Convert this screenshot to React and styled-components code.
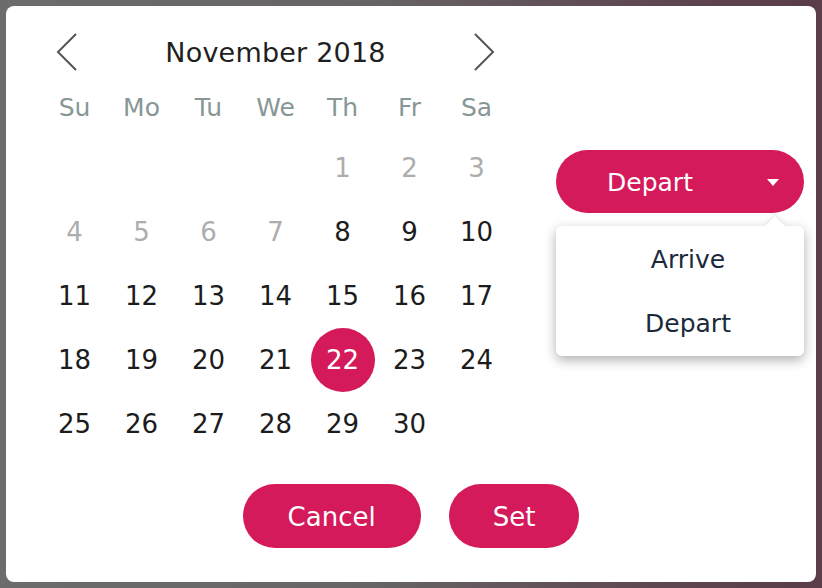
import React, { useState } from 'react';
import styled, { createGlobalStyle } from 'styled-components';

const GlobalStyle = createGlobalStyle`
  html, body {
    margin: 0;
    padding: 0;
  }
  body {
    width: 822px;
    height: 588px;
    overflow: hidden;
    font-family: "DejaVu Sans", "Noto Sans", sans-serif;
    background: linear-gradient(90deg, #6c6c6c 0%, #676465 45%, #5e4652 80%, #5a3c4a 100%);
  }
`;

const CRIMSON = '#d41a5a';

// 背景のオーバーレイ
const Overlay = styled.div`
  width: 822px;
  height: 588px;
  padding: 6px;
  box-sizing: border-box;
`;

const Dialog = styled.div`
  width: 810px;
  height: 576px;
  box-sizing: border-box;
  background: #fff;
  border-radius: 8px;
  padding: 14px 12px 0 35px;
  display: flex;
  flex-direction: column;
`;

const Body = styled.div`
  display: flex;
  align-items: flex-start;
`;

const Calendar = styled.div`
  width: 469px;
`;

const Header = styled.div`
  height: 64px;
  display: flex;
  align-items: center;
  justify-content: space-between;
  padding: 0 14px 0 14px;
`;

const ArrowButton = styled.button`
  border: none;
  background: none;
  padding: 0;
  width: 24px;
  height: 40px;
  display: flex;
  align-items: center;
  justify-content: center;
  cursor: pointer;
`;

const MonthTitle = styled.div`
  font-size: 27px;
  color: #1f1f1f;
  letter-spacing: 0.2px;
`;

const WeekRow = styled.div`
  display: grid;
  grid-template-columns: repeat(7, 67px);
  height: 52px;
  padding-bottom: 6px;
  box-sizing: border-box;
  align-items: center;
`;

const WeekDay = styled.div`
  text-align: center;
  font-size: 25px;
  color: #879796;
`;

const DaysGrid = styled.div`
  display: grid;
  grid-template-columns: repeat(7, 67px);
  grid-auto-rows: 64px;
`;

const DayCell = styled.div`
  display: flex;
  align-items: center;
  justify-content: center;
`;

const Day = styled.button`
  width: 64px;
  height: 64px;
  border-radius: 50%;
  border: none;
  padding: 0;
  font-family: inherit;
  font-size: 26px;
  cursor: pointer;
  background: ${(p) => (p.$selected ? CRIMSON : 'transparent')};
  color: ${(p) => (p.$selected ? '#fff' : p.$disabled ? '#adadad' : '#1c1c1c')};
`;

const Side = styled.div`
  width: 248px;
  margin-left: 46px;
  margin-top: 130px;
  display: flex;
  flex-direction: column;
`;

const SelectButton = styled.button`
  height: 63px;
  border: none;
  border-radius: 32px;
  background: ${CRIMSON};
  color: #fff;
  font-family: inherit;
  font-size: 25px;
  display: flex;
  align-items: center;
  padding: 2px 0 0;
  cursor: pointer;
`;

const SelectLabel = styled.span`
  flex: 1;
  text-align: center;
`;

const Caret = styled.span`
  width: 58px;
  display: flex;
  justify-content: center;
  padding-right: 2px;
`;

const Menu = styled.div`
  position: relative;
  margin-top: 13px;
  background: #fff;
  border-radius: 6px;
  box-shadow: 0 4px 12px rgba(0, 0, 0, 0.32);
  display: flex;
  flex-direction: column;
  padding: 1px 0;
`;

const MenuPointer = styled.div`
  position: absolute;
  top: -7px;
  right: 22px;
  width: 14px;
  height: 14px;
  background: #fff;
  transform: rotate(45deg);
  box-shadow: -2px -2px 4px rgba(0, 0, 0, 0.08);
`;

const MenuItem = styled.div`
  position: relative;
  height: 64px;
  display: flex;
  align-items: center;
  justify-content: center;
  padding-left: 16px;
  font-size: 25px;
  color: #1b2a3a;
  cursor: pointer;
`;

const Footer = styled.div`
  margin-top: 28px;
  margin-left: -35px;
  margin-right: -12px;
  display: flex;
  justify-content: center;
  gap: 28px;
`;

const ActionButton = styled.button`
  height: 64px;
  border: none;
  border-radius: 32px;
  background: ${CRIMSON};
  color: #fff;
  font-family: inherit;
  font-size: 26px;
  padding: 2px ${(p) => p.$pad}px 0;
  cursor: pointer;
`;

const Chevron = ({ dir }) => (
  <svg width="22" height="40" viewBox="0 0 22 40">
    <polyline
      points={dir === 'left' ? '20,2 2,20 20,38' : '2,2 20,20 2,38'}
      fill="none"
      stroke="#555"
      strokeWidth="2"
    />
  </svg>
);

const weekDays = ['Su', 'Mo', 'Tu', 'We', 'Th', 'Fr', 'Sa'];

// 2018年11月は木曜日始まり
const cells = [
  ...Array(4).fill(null),
  ...Array.from({ length: 30 }, (_, i) => i + 1),
];

export default function App() {
  const [selected, setSelected] = useState(22);
  const [mode, setMode] = useState('Depart');

  return (
    <>
      <GlobalStyle />
      <Overlay>
        <Dialog>
          <Body>
            <Calendar>
              <Header>
                <ArrowButton aria-label="previous month">
                  <Chevron dir="left" />
                </ArrowButton>
                <MonthTitle>November 2018</MonthTitle>
                <ArrowButton aria-label="next month">
                  <Chevron dir="right" />
                </ArrowButton>
              </Header>
              <WeekRow>
                {weekDays.map((d) => (
                  <WeekDay key={d}>{d}</WeekDay>
                ))}
              </WeekRow>
              <DaysGrid>
                {cells.map((day, index) => (
                  <DayCell key={index}>
                    {day && (
                      <Day
                        $disabled={day < 8}
                        $selected={day === selected}
                        onClick={() => day >= 8 && setSelected(day)}
                      >
                        {day}
                      </Day>
                    )}
                  </DayCell>
                ))}
              </DaysGrid>
            </Calendar>
            <Side>
              <SelectButton>
                <SelectLabel>{mode}</SelectLabel>
                <Caret>
                  <svg width="12" height="7" viewBox="0 0 12 7">
                    <polygon points="0,0 12,0 6,7" fill="#fff" />
                  </svg>
                </Caret>
              </SelectButton>
              <Menu>
                <MenuPointer />
                <MenuItem onClick={() => setMode('Arrive')}>Arrive</MenuItem>
                <MenuItem onClick={() => setMode('Depart')}>Depart</MenuItem>
              </Menu>
            </Side>
          </Body>
          <Footer>
            <ActionButton $pad={45}>Cancel</ActionButton>
            <ActionButton $pad={44}>Set</ActionButton>
          </Footer>
        </Dialog>
      </Overlay>
    </>
  );
}
